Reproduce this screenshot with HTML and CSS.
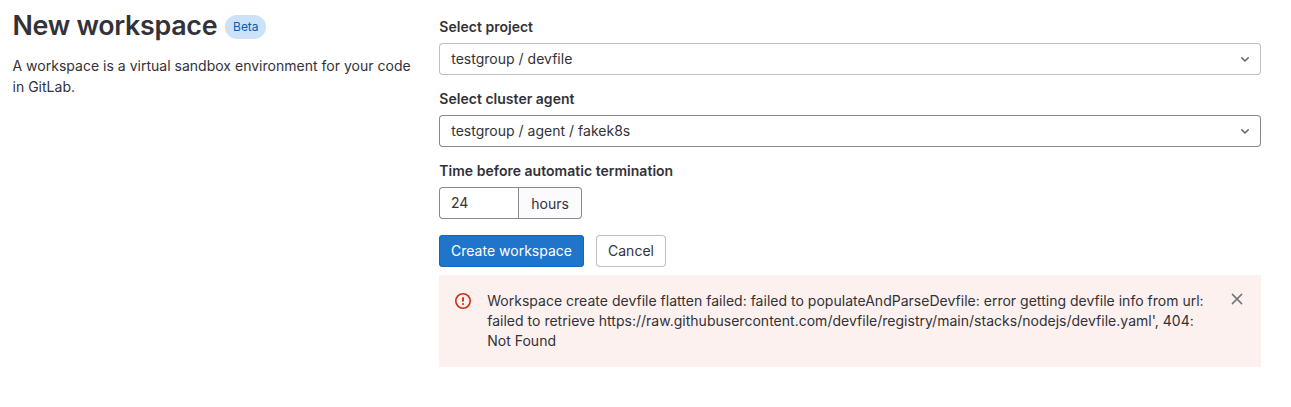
FILE: index.html
```html
<!DOCTYPE html>
<html lang="en">
<head>
<meta charset="utf-8">
<title>New workspace</title>
<link rel="stylesheet" href="styles.css">
</head>
<body>
<main class="page">
  <section class="intro">
    <div class="title-row">
      <h1 class="title">New workspace</h1>
      <span class="badge">Beta</span>
    </div>
    <p class="description">A workspace is a virtual sandbox environment for your code in GitLab.</p>
  </section>
  <form class="form">
    <div class="group">
      <label class="label">Select project</label>
      <button type="button" class="select">
        <span>testgroup / devfile</span>
        <svg class="chevron" viewBox="0 0 16 16"><path d="M4.75 6.75 8 10l3.25-3.25"/></svg>
      </button>
    </div>
    <div class="group">
      <label class="label">Select cluster agent</label>
      <button type="button" class="select select-strong">
        <span>testgroup / agent / fakek8s</span>
        <svg class="chevron" viewBox="0 0 16 16"><path d="M4.75 6.75 8 10l3.25-3.25"/></svg>
      </button>
    </div>
    <div class="group">
      <label class="label" for="hours">Time before automatic termination</label>
      <div class="input-group">
        <input class="input" id="hours" value="24">
        <span class="suffix">hours</span>
      </div>
    </div>
    <div class="actions">
      <button type="button" class="btn btn-confirm">Create workspace</button>
      <button type="button" class="btn btn-default">Cancel</button>
    </div>
    <div class="alert">
      <svg class="alert-icon" viewBox="0 0 16 16"><circle cx="8" cy="8" r="7.2"/><path class="stem" d="M8 4.9v2.9"/><circle class="dot" cx="8" cy="11" r="1"/></svg>
      <p class="alert-text">Workspace create devfile flatten failed: failed to populateAndParseDevfile: error getting devfile info from url: failed to retrieve https://raw.githubusercontent.com/devfile/registry/main/stacks/nodejs/devfile.yaml', 404: Not Found</p>
      <svg class="close" viewBox="0 0 16 16"><path d="m3.4 3.4 9.2 9.2M12.6 3.4l-9.2 9.2"/></svg>
    </div>
  </form>
</main>
</body>
</html>
```
FILE: styles.css
```css
* { box-sizing: border-box; }
body { margin: 0; background: #fff; color: #333238; font: 14px/20px Inter, "Noto Sans", sans-serif; letter-spacing: 0.012px; }
.page { display: flex; padding: 7px 30px 0 12.5px; }
.intro { width: 426.5px; padding-right: 24px; }
.title-row { display: flex; align-items: center; gap: 8px; }
.title { margin: 0; font-size: 26.8px; line-height: 36px; font-weight: 600; letter-spacing: -0.27px; }
.badge { width: 41px; padding: 4px 0; border-radius: 12px; background: #cbe2f9; color: #0b5cad; font-size: 12px; line-height: 16px; text-align: center; letter-spacing: -0.05px; margin-top: 3px; }
.description { margin: 12px 0 0; line-height: 21px; }
.form { width: 822px; padding-top: 10px; }
.group { margin-bottom: 14px; }
.label { display: block; margin-bottom: 6px; padding-left: 0.3px; font-weight: 600; letter-spacing: 0.02px; }
.select { display: flex; align-items: center; justify-content: space-between; width: 100%; height: 32px; padding: 0 8px 0 12.2px; border: 0; border-radius: 4px; background: #fff; box-shadow: inset 0 0 0 1px #bfbfc3; color: inherit; font: inherit; letter-spacing: inherit; }
.select-strong { box-shadow: inset 0 0 0 1px #89888d; }
.chevron { width: 16px; height: 16px; fill: none; stroke: #626168; stroke-width: 1.5; stroke-linecap: round; stroke-linejoin: round; }
.input-group { display: flex; height: 32px; }
.input { width: 80px; padding: 0 12px; border: 0; border-radius: 4px 0 0 4px; box-shadow: inset 0 0 0 1px #89888d; color: inherit; font: inherit; }
.suffix { width: 63px; padding: 6px 0 5px 12.3px; border: 1px solid #89888d; border-left: 0; border-radius: 0 4px 4px 0; background: #fbfafd; line-height: 20px; }
.actions { display: flex; gap: 12px; margin-top: 16px; }
.btn { height: 32px; padding: 0; border: 0; border-radius: 4px; font: inherit; letter-spacing: inherit; }
.btn-confirm { width: 145px; background: #1f75cb; box-shadow: inset 0 0 0 1px #1068bf; color: #fff; }
.btn-default { width: 70px; background: #fff; box-shadow: inset 0 0 0 1px #bfbfc3; color: inherit; }
.alert { display: flex; align-items: flex-start; margin-top: 8px; padding: 16px; background: #fcf1ef; }
.alert-icon { flex: none; width: 16px; height: 16px; margin: 2px 16px 0 0; fill: none; stroke: #d42a10; stroke-width: 1.6; stroke-linecap: round; }
.stem { stroke-width: 1.9; }
.dot { fill: #d42a10; stroke: none; }
.alert-text { flex: 1; margin: 0; padding-left: 0.2px; letter-spacing: 0.015px; }
.close { flex: none; width: 16px; height: 16px; margin-left: 24px; fill: none; stroke: #737278; stroke-width: 1.5; stroke-linecap: round; }
```
